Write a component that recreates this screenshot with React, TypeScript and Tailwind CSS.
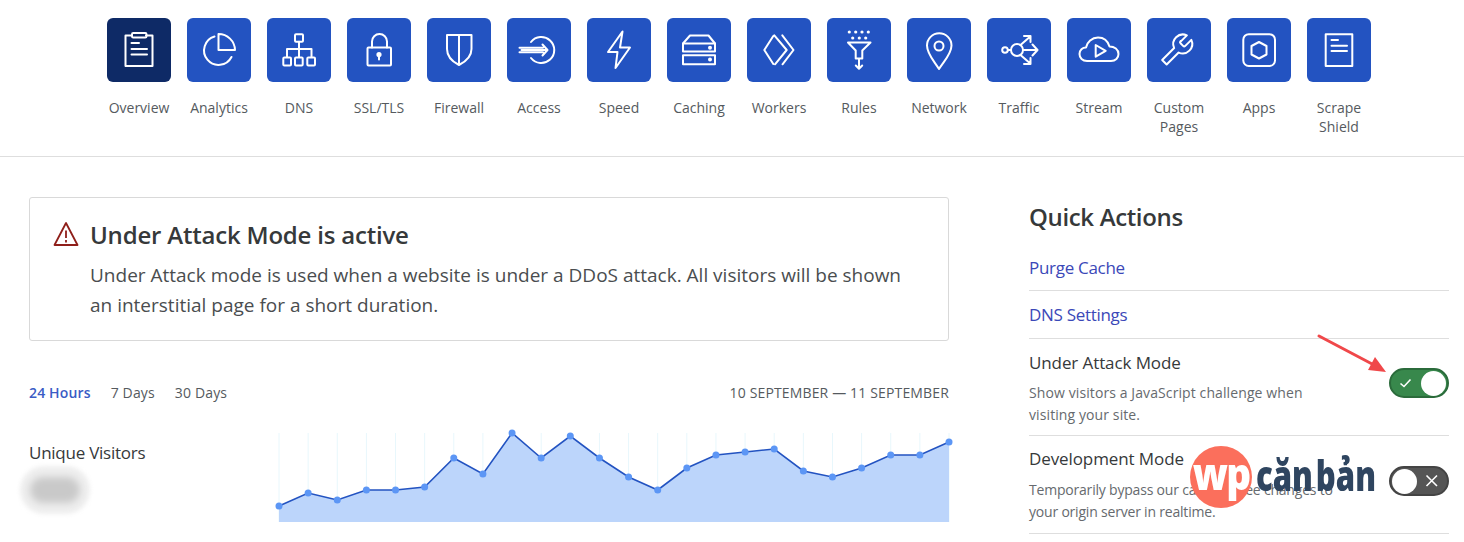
const font = "font-['Open_Sans',sans-serif]";

const chartValues = [506, 493, 500, 490, 490, 487, 458, 474, 433, 458, 436, 458, 477, 490, 468, 455, 452, 449, 471, 477, 468, 455, 455, 442];

const navItems = [
  {
    label: "Overview",
    icon: (
      <>
        <path d="M25 17.5h-6.5v30.5h27V17.5H39" />
        <rect x="25" y="15" width="14.5" height="4.5" rx="1.2" />
        <path d="M24.5 25h7.5M24.5 31H40M24.5 36.5H40" />
      </>
    ),
  },
  {
    label: "Analytics",
    icon: (
      <>
        <path d="M27.5 18.5A14.5 14.5 0 1 0 44.5 39" />
        <path d="M31.5 16V32H48A16.5 16.5 0 0 0 31.5 16Z" />
      </>
    ),
  },
  {
    label: "DNS",
    icon: (
      <>
        <rect x="28" y="16.2" width="8" height="7.5" rx="1" />
        <path d="M32 23.7V39M20 39v-8h24.5v8" />
        <rect x="16.3" y="39.5" width="7.7" height="8" rx="1" />
        <rect x="28" y="39.5" width="7.7" height="8" rx="1" />
        <rect x="40.3" y="39.5" width="7.7" height="8" rx="1" />
      </>
    ),
  },
  {
    label: "SSL/TLS",
    icon: (
      <>
        <rect x="20.5" y="29.5" width="23.5" height="18" rx="1" />
        <path d="M25 29.5v-6a7.5 7.5 0 0 1 15 0v6" />
        <circle cx="32" cy="36.5" r="1.6" fill="white" />
        <path d="M32 37v4.5" />
      </>
    ),
  },
  {
    label: "Firewall",
    icon: <path d="M20 17H44.5V31C44.5 39 38 44 32 47C26 44 20 39 20 31ZM32 17V47" />,
  },
  {
    label: "Access",
    icon: (
      <>
        <path d="M24 24a13 13 0 1 1 0 16" />
        <path d="M12.5 29.7H36M14.5 32H40M12.5 34.3H36M35.5 26.5L40.5 32L35.5 37.5" />
      </>
    ),
  },
  {
    label: "Speed",
    icon: <path d="M35.5 13.5L21 34H30.5L28.5 50L43 29.5H33Z" />,
  },
  {
    label: "Caching",
    icon: (
      <>
        <path d="M16 25.5L23 17.5H41.5L48 25.5V33.5H16Z" />
        <path d="M16 25.5H48" />
        <rect x="16" y="37.2" width="32" height="9" />
        <circle cx="43" cy="29.7" r="1" fill="white" />
        <circle cx="43" cy="41.5" r="1" fill="white" />
      </>
    ),
  },
  {
    label: "Workers",
    icon: <path d="M26.3 18L17.3 32L26.3 46M27.3 17.3L39.7 32L28 46.3M35.3 17.3L46.5 32L35.5 46.3" />,
  },
  {
    label: "Rules",
    icon: (
      <>
        {[22.3, 28.7, 35, 41.3].map((x) => (
          <circle key={x} cx={x} cy="14" r="1.6" fill="white" stroke="none" />
        ))}
        {[25.7, 32.3, 38.7].map((x) => (
          <circle key={x} cx={x} cy="20" r="1.6" fill="white" stroke="none" />
        ))}
        <path d="M21 24.5H43.5L35.3 32.5V40.5H28.7V32.5Z" />
        <path d="M32 41.5V50.5M28.8 47.5L32 50.8L35.2 47.5" />
      </>
    ),
  },
  {
    label: "Network",
    icon: (
      <>
        <path d="M32 51C27 43 20 36 20 27.5A12.2 12.2 0 0 1 44.5 27.5C44.5 36 37 43 32 51Z" />
        <circle cx="32" cy="28" r="4.5" />
      </>
    ),
  },
  {
    label: "Traffic",
    icon: (
      <>
        <circle cx="18" cy="32" r="2.8" />
        <circle cx="30" cy="32" r="6" />
        <path d="M21 32H24M36 32H50M33.5 27L43 18.7M33.5 37L43 45.3M45.5 26.5L50.5 32L45.5 37.5M37 18H43.5V24M37 46H43.5V40" />
      </>
    ),
  },
  {
    label: "Stream",
    icon: (
      <>
        <path d="M20 43C15.5 43 12.5 40 12.5 36C12.5 32 15.5 29.5 19 29.5C20 24 25 19.5 31 19.5C37 19.5 41 23.5 42.5 28.5C47.5 28.5 51.5 31.5 51.5 36C51.5 40 48.5 43 44 43Z" />
        <path d="M28.7 27V38.7L38.7 32.8Z" />
      </>
    ),
  },
  {
    label: "Custom Pages",
    icon: (
      <g transform="translate(10 13) scale(1.6)" strokeWidth="1.25">
        <path d="M14.7 6.3a1 1 0 0 0 0 1.4l1.6 1.6a1 1 0 0 0 1.4 0l3.77-3.77a6 6 0 0 1-7.94 7.94l-7.5 7.5-2.8-2.8 7.5-7.5a6 6 0 0 1 7.94-7.94l-3.76 3.76z" />
      </g>
    ),
  },
  {
    label: "Apps",
    icon: (
      <>
        <rect x="16.3" y="16.2" width="31.7" height="31.8" rx="5.5" />
        <path d="M32 24L39.5 28V36.5L32 40.5L24.5 36.5V28Z" />
      </>
    ),
  },
  {
    label: "Scrape Shield",
    icon: (
      <>
        <rect x="18.7" y="16.2" width="26.6" height="31.8" />
        <path d="M24.5 22H31M24.5 27.7H40M24.5 33H40" />
      </>
    ),
  },
];

function NavItem({ label, icon, active }: { label: string; icon: React.ReactNode; active?: boolean }) {
  return (
    <div className="w-[80px] flex flex-col items-center">
      <div className={`w-[64px] h-[64px] rounded-[6px] ${active ? "bg-[#0e2a66]" : "bg-[#2353c1]"}`}>
        <svg viewBox="0 0 64 64" width="64" height="64" fill="none" stroke="white" strokeWidth="2" strokeLinejoin="round" strokeLinecap="round">
          {icon}
        </svg>
      </div>
      <div className="mt-[16px] w-[76px] text-center text-[14px] leading-[19px] text-[#555a5e]">{label}</div>
    </div>
  );
}

function Toggle({ on }: { on?: boolean }) {
  return (
    <div className={`w-[60px] h-[30px] shrink-0 rounded-full border-2 flex items-center px-[1px] ${on ? "bg-[#38884c] border-[#2b6b3b] justify-end" : "bg-[#555555] border-[#444444] justify-start"}`}>
      {on && (
        <svg width="16" height="16" viewBox="0 0 16 16" fill="none" stroke="white" strokeWidth="1.6" className="mr-[7px]">
          <path d="M2.5 8.5L6 11.5L12.5 4.5" />
        </svg>
      )}
      <div className="w-[25px] h-[25px] rounded-full bg-white" />
      {!on && (
        <svg width="16" height="16" viewBox="0 0 16 16" fill="none" stroke="white" strokeWidth="1.6" className="ml-[7px]">
          <path d="M2.5 2.5L13 13M13 2.5L2.5 13" />
        </svg>
      )}
    </div>
  );
}

function Chart() {
  const step = 670 / 23;
  const pts = chartValues.map((y, i) => [i * step + 5, y - 428]);
  const line = pts.map((p) => p.join(",")).join(" ");
  return (
    <svg width="680" height="100" viewBox="0 0 680 100" className="block shrink-0">
      {pts.map((p) => (
        <line key={p[0]} x1={p[0]} x2={p[0]} y1="5" y2="94" stroke="#e8f7fc" strokeWidth="1" />
      ))}
      <polygon points={`5,94 ${line} 675,94`} fill="#bcd5fb" />
      <polyline points={line} fill="none" stroke="#2353c1" strokeWidth="1.6" />
      {pts.map((p) => (
        <circle key={p[0]} cx={p[0]} cy={p[1]} r="3.5" fill="#5c96f5" />
      ))}
    </svg>
  );
}

export default function App() {
  return (
    <div className={`relative w-[1464px] h-[542px] overflow-hidden bg-white text-[#36393a] ${font}`}>
      <div className="h-[157px] border-b border-[#dedede] pt-[18px] pl-[99px] flex items-start">
        {navItems.map((item, i) => (
          <NavItem key={item.label} label={item.label} icon={item.icon} active={i === 0} />
        ))}
      </div>

      <div className="flex pl-[29px] pt-[40px]">
        <div className="w-[920px] shrink-0">
          <div className="h-[144px] border border-[#d9d9d9] rounded-[3px] pl-[23px] pt-[19px] flex">
            <svg width="26" height="26" viewBox="0 0 26 26" fill="none" stroke="#8f1f1a" strokeWidth="1.8" strokeLinejoin="round" className="mt-[4px] shrink-0">
              <path d="M13 2L1.5 24H24.5Z" />
              <path d="M13 9.5V17M13 19V21.5" />
            </svg>
            <div className="ml-[11px]">
              <div className="text-[24px] leading-[36px] font-semibold tracking-[-0.2px] text-[#36393a]">Under Attack Mode is active</div>
              <p className="mt-[7px] w-[815px] text-[19px] leading-[30px] text-[#4a4d4f]">
                Under Attack mode is used when a website is under a DDoS attack. All visitors will be shown an interstitial page for a short duration.
              </p>
            </div>
          </div>

          <div className="mt-[42px] flex justify-between text-[14px] leading-[20px] tracking-[0.15px] text-[#555a5e]">
            <div className="flex gap-[20px]">
              <span className="font-semibold text-[#3a5cc5]">24 Hours</span>
              <span>7 Days</span>
              <span>30 Days</span>
            </div>
            <span>10 SEPTEMBER — 11 SEPTEMBER</span>
          </div>

          <div className="mt-[25px] flex">
            <div className="w-[245px] shrink-0">
              <div className="mt-[13px] text-[17px] leading-[24px] tracking-[-0.25px] text-[#36393a]">Unique Visitors</div>
              <div className="mt-[1px] -ml-[9px] w-[70px] h-[48px] rounded-full bg-[#efefef] blur-[2px] flex items-center justify-center">
                <div className="w-[50px] h-[26px] rounded-full bg-[#c9c9c9] blur-[3px]" />
              </div>
            </div>
            <Chart />
          </div>
        </div>

        <div className="ml-[80px] w-[420px] shrink-0">
          <div className="text-[24px] leading-[40px] font-semibold tracking-[-0.35px]">Quick Actions</div>
          <div className="mt-[10px] h-[44px] border-b border-[#dedede] text-[17px] leading-[24px] tracking-[-0.3px] text-[#3b48b8] pt-[9px]">Purge Cache</div>
          <div className="h-[48px] border-b border-[#dedede] text-[17px] leading-[24px] tracking-[-0.3px] text-[#3b48b8] pt-[12px]">DNS Settings</div>
          <div className="h-[97px] border-b border-[#dedede] pt-[12px] flex justify-between">
            <div className="w-[300px]">
              <div className="text-[17px] leading-[24px] tracking-[-0.1px]">Under Attack Mode</div>
              <p className="mt-[7px] text-[14px] leading-[22px] tracking-[0.1px] text-[#666a6e]">Show visitors a JavaScript challenge when visiting your site.</p>
            </div>
            <div className="mt-[17px]"><Toggle on /></div>
          </div>
          <div className="h-[98px] border-b border-[#dedede] pt-[11px] flex justify-between">
            <div className="w-[325px]">
              <div className="text-[17px] leading-[24px] tracking-[-0.1px]">Development Mode</div>
              <p className="mt-[8px] text-[14px] leading-[22px] tracking-[-0.2px] text-[#666a6e]">Temporarily bypass our cache to see changes to your origin server in realtime.</p>
            </div>
            <div className="mt-[19px]"><Toggle /></div>
          </div>
        </div>
      </div>

      {/* watermark */}
      <div className="absolute left-[1190px] top-[446px] flex items-center">
        <div className="w-[62px] h-[62px] rounded-full bg-[#fb6f5c] flex items-center justify-center">
          <span className="scale-x-[0.88] text-white text-[44px] font-extrabold leading-none tracking-[-2px] pb-[8px]">wp</span>
        </div>
        <div className="ml-[4px] origin-left scale-x-[0.74] text-[#2f4560] text-[42px] font-extrabold leading-none whitespace-nowrap -mt-[4px] [word-spacing:-7px]">căn bản</div>
      </div>

      {/* arrow */}
      <svg className="absolute left-[1310px] top-[330px]" width="80" height="50" viewBox="0 0 80 50" fill="none">
        <path d="M9 6L64 35" stroke="#f0484a" strokeWidth="3" strokeLinecap="round" />
        <path d="M76 42L58 40L65 27Z" fill="#f0484a" />
      </svg>
    </div>
  );
}
